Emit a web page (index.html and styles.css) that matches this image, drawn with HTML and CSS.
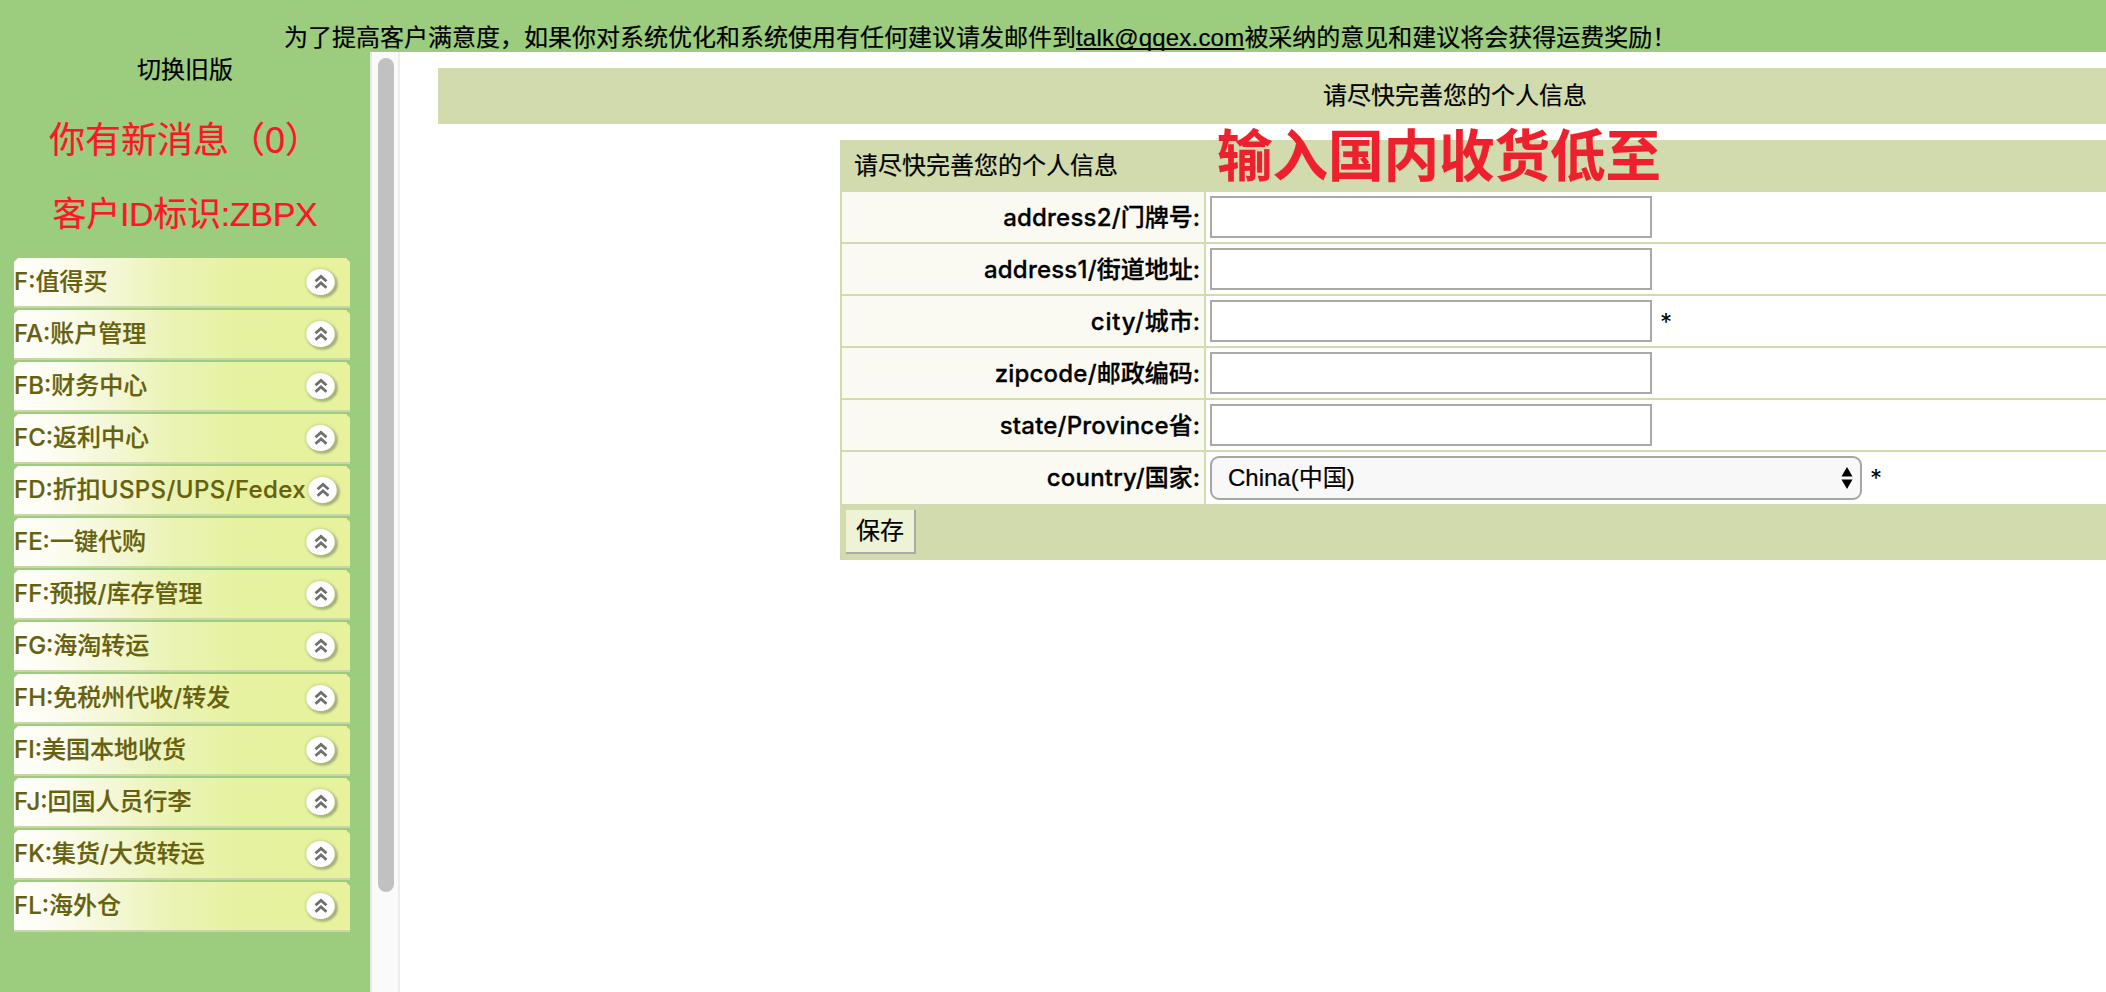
FILE: index.html
```html
<!DOCTYPE html>
<html lang="zh-CN">
<head>
<meta charset="utf-8">
<title>个人信息</title>
<link rel="stylesheet" href="styles.css">
</head>
<body>
<svg class="defs" width="0" height="0">
  <defs>
    <filter id="soft" x="-20%" y="-20%" width="140%" height="140%"><feGaussianBlur stdDeviation="1.1"/></filter>
    <symbol id="up" viewBox="0 0 36 34">
      <ellipse cx="18.6" cy="18" rx="15" ry="13.6" fill="#8f966c" opacity=".85" filter="url(#soft)"/>
      <ellipse cx="16.5" cy="16" rx="15.6" ry="14.2" fill="#c9d08c" opacity=".7" filter="url(#soft)"/>
      <ellipse cx="16.5" cy="16" rx="14.2" ry="13" fill="#fff"/>
      <path d="M11.5 15.2l5.5-4.8 5.5 4.8M11.5 21.7l5.5-4.8 5.5 4.8" fill="none" stroke="#707070" stroke-width="2.8"/>
    </symbol>
  </defs>
</svg>
<header class="notice">为了提高客户满意度，如果你对系统优化和系统使用有任何建议请发邮件到<a class="mail">talk@qqex.com</a>被采纳的意见和建议将会获得运费奖励！</header>
<div class="page">
  <aside class="side">
    <div class="switch">切换旧版</div>
    <div class="msg">你有新消息（0）</div>
    <div class="cid">客户ID标识:ZBPX</div>
    <nav class="menu">
      <div class="item"><span>F:值得买</span><svg class="ico"><use href="#up"/></svg></div>
      <div class="item"><span>FA:账户管理</span><svg class="ico"><use href="#up"/></svg></div>
      <div class="item"><span>FB:财务中心</span><svg class="ico"><use href="#up"/></svg></div>
      <div class="item"><span>FC:返利中心</span><svg class="ico"><use href="#up"/></svg></div>
      <div class="item"><span>FD:折扣<b class="wide">USPS/UPS/Fedex</b></span><svg class="ico"><use href="#up"/></svg></div>
      <div class="item"><span>FE:一键代购</span><svg class="ico"><use href="#up"/></svg></div>
      <div class="item"><span>FF:预报/库存管理</span><svg class="ico"><use href="#up"/></svg></div>
      <div class="item"><span>FG:海淘转运</span><svg class="ico"><use href="#up"/></svg></div>
      <div class="item"><span>FH:免税州代收/转发</span><svg class="ico"><use href="#up"/></svg></div>
      <div class="item"><span>FI:美国本地收货</span><svg class="ico"><use href="#up"/></svg></div>
      <div class="item"><span>FJ:回国人员行李</span><svg class="ico"><use href="#up"/></svg></div>
      <div class="item"><span>FK:集货/大货转运</span><svg class="ico"><use href="#up"/></svg></div>
      <div class="item"><span>FL:海外仓</span><svg class="ico"><use href="#up"/></svg></div>
    </nav>
  </aside>
  <div class="scroll"><div class="thumb"></div></div>
  <main class="main">
    <div class="title">请尽快完善您的个人信息</div>
    <form class="form">
      <div class="head">请尽快完善您的个人信息<strong class="note">输入国内收货低至</strong></div>
      <div class="row"><label class="label"><b class="latin">address2/</b>门牌号:</label><div class="cell"><div class="input"></div></div></div>
      <div class="row"><label class="label"><b class="latin">address1/</b>街道地址:</label><div class="cell"><div class="input"></div></div></div>
      <div class="row"><label class="label"><b class="latin city">city/</b>城市:</label><div class="cell"><div class="input"></div><span class="star">*</span></div></div>
      <div class="row"><label class="label"><b class="latin">zipcode/</b>邮政编码:</label><div class="cell"><div class="input"></div></div></div>
      <div class="row"><label class="label"><b class="latin">state/Province</b>省:</label><div class="cell"><div class="input"></div></div></div>
      <div class="row last"><label class="label"><b class="latin">country/</b>国家:</label><div class="cell"><div class="select"><span>China(中国)</span><svg class="arrows" viewBox="0 0 12 22"><path d="M6 0l5.5 9.5H.5zM6 22L.5 12.5h11z"/></svg></div><span class="star">*</span></div></div>
      <div class="foot"><div class="btn">保存</div></div>
    </form>
  </main>
</div>
</body>
</html>
```
FILE: styles.css
```css
* { box-sizing: border-box; }
body {
  margin: 0;
  width: 2106px;
  height: 992px;
  overflow: hidden;
  background: #9ccd7e;
  color: #000;
  font: 24px/34px "Liberation Sans", "Noto Sans CJK SC", sans-serif;
  white-space: nowrap;
  -webkit-text-stroke: 0.2px;
}
.defs { position: absolute; }
.notice { height: 52px; padding: 21px 0 0 284px; }
.mail { letter-spacing: 0.2px; text-decoration: underline; text-decoration-thickness: 2px; text-underline-offset: 2px; text-decoration-skip-ink: none; }
.page { display: flex; height: 940px; }

.side { width: 370px; text-align: center; padding-top: 1px; }
.switch { height: 36px; }
.msg { height: 72px; margin-top: 16px; font-size: 36px; line-height: 72px; color: #ff1428; }
.cid { height: 72px; margin-top: 1px; font-size: 34px; line-height: 72px; letter-spacing: -0.3px; color: #ff1428; }
.menu { display: flex; flex-direction: column; gap: 2px; margin: 8px 20px 0 14px; }
.item {
  display: flex;
  justify-content: space-between;
  align-items: center;
  height: 50px;
  padding-right: 10px;
  border-bottom: 2px solid #cdd4a9;
  background: linear-gradient(90deg, #fffffb 0, #fdfdf4 10%, #f4f7d4 30%, #ebf3b4 47%, #e6f2a0 68%, #e6f29c 100%);
  clip-path: polygon(4px 0, calc(100% - 4px) 0, 100% 4px, 100% 100%, 0 100%, 0 4px);
  color: #66610f;
  font-family: Inter, "Noto Sans CJK SC", sans-serif;
  font-weight: 500;
  -webkit-text-stroke: 0.2px;
}
.item span { width: 292px; text-align: left; }
.wide { font-weight: 500; letter-spacing: 0.4px; }
.latin { font-weight: 500; letter-spacing: 0.2px; }
.city { letter-spacing: 0.8px; }
.ico { width: 36px; height: 34px; flex: none; margin-top: 2px; }

.scroll { width: 30px; background: #fafafa; border-left: 2px solid #e7e7e7; border-right: 2px solid #ededed; padding: 6px 4px 0 6px; }
.thumb { width: 16px; height: 834px; border-radius: 8px; background: #c1c1c1; }

.main { width: 1706px; overflow: hidden; background: #fff; padding: 16px 0 0 38px; }
.title { width: 2034px; height: 56px; line-height: 56px; text-align: center; background: #d2dbad; }
.form { width: 1400px; margin: 16px 0 0 402px; background: #d2dbad; }
.head { position: relative; height: 52px; padding-left: 14px; line-height: 52px; }
.note { position: absolute; left: 377px; top: -13px; font-size: 55.5px; line-height: 60px; color: #ee202d; }
.row { display: flex; gap: 2px; height: 52px; padding: 0 0 2px 2px; }
.row.last { padding-bottom: 0; }
.label { width: 362px; padding-right: 4px; line-height: 52px; text-align: right; background: #fafaf2; font-family: Inter, "Noto Sans CJK SC", sans-serif; font-weight: 500; -webkit-text-stroke: 0.3px; }
.cell { flex: 1; display: flex; align-items: flex-start; padding: 4px; background: #fff; }
.input { width: 442px; height: 42px; border: 2px solid #a9a9a9; background: #fff; }
.star { margin-left: 8px; line-height: 46px; font-family: Inter, sans-serif; -webkit-text-stroke: 0; }
.select { display: flex; justify-content: space-between; align-items: center; width: 652px; height: 44px; padding: 0 7px 0 16px; border: 2px solid #a6a6a6; border-radius: 9px; background: #f8f8f8; }
.arrows { width: 12px; height: 22px; }
.foot { height: 56px; padding: 6px; }
.btn { width: 70px; height: 44px; padding-left: 10px; line-height: 42px; background: #eff3d5; border-right: 2px solid #aaa; border-bottom: 2px solid #aaa; }
```
